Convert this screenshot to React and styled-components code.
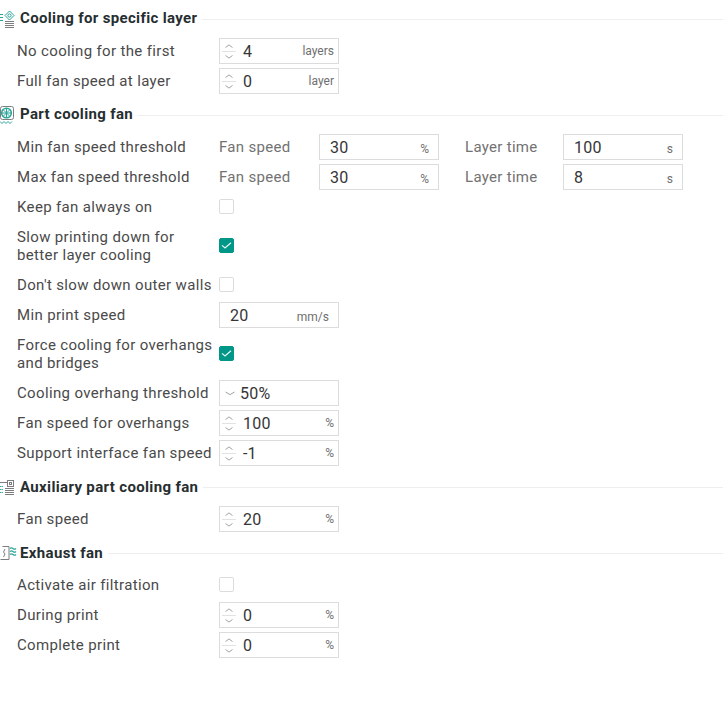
import React from "react";
import styled, { createGlobalStyle } from "styled-components";

const GlobalStyle = createGlobalStyle`
  html, body {
    margin: 0;
    padding: 0;
    background: #fff;
  }
  body {
    font-family: Roboto, "Noto Sans", sans-serif;
  }
`;

const Page = styled.div`
  width: 723px;
  height: 718px;
  overflow: hidden;
  padding-top: 8px;
  box-sizing: border-box;
`;

const Section = styled.section`
  margin-top: ${(p) => p.$top || 0}px;
`;

const Header = styled.div`
  display: flex;
  align-items: center;
  height: 20px;
  margin-bottom: ${(p) => p.$bottom}px;
`;

const IconSlot = styled.span`
  width: 20px;
  height: 20px;
  flex: none;
  display: block;
  svg {
    display: block;
  }
`;

const Title = styled.h3`
  margin: 0 5px 0 0;
  font-size: 15px;
  line-height: 20px;
  font-weight: 700;
  letter-spacing: 0.35px;
  color: #262e30;
  white-space: nowrap;
`;

const Rule = styled.span`
  flex: 1;
  height: 1px;
  margin-top: ${(p) => p.$top ?? 2}px;
  background: #eeeeee;
`;

const Rows = styled.div`
  display: flex;
  flex-direction: column;
  gap: 4px;
  padding-left: 17px;
`;

const Row = styled.div`
  display: flex;
  align-items: center;
  min-height: ${(p) => (p.$tall ? 44 : 26)}px;
`;

const Label = styled.label`
  width: 202px;
  flex: none;
  font-size: 15px;
  line-height: 18px;
  letter-spacing: 0.35px;
  color: #4a4a4a;
  white-space: pre-line;
`;

const SideLabel = styled.span`
  width: ${(p) => p.$w}px;
  flex: none;
  font-size: 15px;
  letter-spacing: 0.3px;
  color: #727272;
  white-space: nowrap;
`;

const Field = styled.div`
  width: 120px;
  height: 26px;
  box-sizing: border-box;
  flex: none;
  display: flex;
  align-items: center;
  border: 1px solid #dcdcdc;
  margin-right: ${(p) => p.$after || 0}px;
  background: #fff;
`;

const Spinner = styled.span`
  width: 23px;
  height: 24px;
  flex: none;
  display: block;
  svg {
    display: block;
  }
`;

const Value = styled.span`
  font-size: 16px;
  letter-spacing: 0.2px;
  color: #363636;
  padding-left: ${(p) => p.$pad ?? 0}px;
  flex: 1;
`;

const Unit = styled.span`
  font-size: 12px;
  color: #6f6f6f;
  padding-right: ${(p) => p.$right}px;
  padding-top: ${(p) => (p.$low ? 4 : 0)}px;
`;

const Box = styled.span`
  width: 15px;
  height: 15px;
  box-sizing: border-box;
  flex: none;
  margin-bottom: 2px;
  border-radius: 2px;
  border: 1px solid ${(p) => (p.$on ? "#009688" : "#dcdcdc")};
  background: ${(p) => (p.$on ? "#009688" : "#fff")};
  display: flex;
  align-items: center;
  justify-content: center;
`;

const teal = "#2aa59a";
const ink = "#7d7d7d";

const SpecificIcon = () => (
  <svg width="18" height="20" viewBox="0 0 18 20" fill="none">
    <g stroke={teal} strokeWidth="1">
      <path d="M0 6.5h3M0 9.5h3M0 12.5h3" />
      <path d="M9.5 3l4.5 4.5-4.5 4.5L5 7.5z" />
      <circle cx="9.5" cy="7.5" r="1.6" />
    </g>
    <path d="M5 13.5h9M5 15.5h9M5 17.5h9M5 19.5h9" stroke={ink} strokeWidth="1" />
  </svg>
);

const PartFanIcon = () => (
  <svg width="18" height="20" viewBox="0 0 18 20" fill="none">
    <rect x="0.5" y="2.5" width="13" height="13" rx="2" stroke={ink} />
    <circle cx="6.5" cy="9" r="4.8" stroke={teal} strokeWidth="1.6" />
    <path d="M6.5 4.5v9M2 9h9M3.4 5.9l6.2 6.2M9.6 5.9l-6.2 6.2" stroke={teal} />
    <path d="M0 17.5l2 2 2-2 2 2 2-2 2 2 2-2" stroke={teal} />
  </svg>
);

const AuxIcon = () => (
  <svg width="18" height="20" viewBox="0 0 18 20" fill="none">
    <rect x="7.5" y="3.5" width="6" height="6" stroke={ink} />
    <rect x="9.5" y="5.5" width="2" height="2" stroke={ink} />
    <path d="M0 5.5h7" stroke={ink} />
    <path d="M0 9.5h3M0 12.5h3M0 15.5h3" stroke={teal} strokeDasharray="1.5 0.6" />
    <path d="M5 11.5h9M5 13.5h9M5 15.5h9M5 17.5h9" stroke={ink} />
  </svg>
);

const ExhaustIcon = () => (
  <svg width="18" height="20" viewBox="0 0 18 20" fill="none">
    <path d="M2.5 3.5h6.5v13H0.5" stroke={ink} />
    <path d="M5 6l-1.5 3 1.5 2-1.5 3" stroke={ink} />
    <path d="M10 5.5q1.5-1.4 3 0t3 0M10 8.5q1.5-1.4 3 0t3 0M10 11.5q1.5-1.4 3 0t3 0" stroke={teal} strokeWidth="1.2" />
  </svg>
);

const SpinIcon = () => (
  <svg width="23" height="24" viewBox="0 0 23 24" fill="none">
    <path d="M5.5 8.5l3.5-2.6 3.5 2.6" stroke="#a3a3a3" strokeWidth="1" />
    <path d="M2 12.5h14" stroke="#e2e2e2" />
    <path d="M5.5 16.5l3.5 2.6 3.5-2.6" stroke="#a3a3a3" strokeWidth="1" />
  </svg>
);

const ChevronIcon = () => (
  <svg width="20" height="24" viewBox="0 0 20 24" fill="none">
    <path d="M5.5 11l4.5 2.6 4.5-2.6" stroke="#a3a3a3" />
  </svg>
);

const Tick = () => (
  <svg width="11" height="9" viewBox="0 0 11 9" fill="none">
    <path d="M1 4.4l3 2.6 6-5.2" stroke="#e8f6f4" strokeWidth="1.2" />
  </svg>
);

// spinner field: stepper on the left, value, unit on the right
const Spin = ({ value, unit }) => (
  <Field>
    <Spinner>
      <SpinIcon />
    </Spinner>
    <Value>{value}</Value>
    <Unit $right={4}>{unit}</Unit>
  </Field>
);

const Plain = ({ value, unit, after }) => (
  <Field $after={after}>
    <Value $pad={10}>{value}</Value>
    <Unit $low $right={9}>{unit}</Unit>
  </Field>
);

const Threshold = ({ label }) => (
  <Row>
    <Label>{label}</Label>
    <SideLabel $w={100}>Fan speed</SideLabel>
    <Plain value="30" unit="%" after={26} />
    <SideLabel $w={98}>Layer time</SideLabel>
    <Plain value={label.startsWith("Min") ? "100" : "8"} unit="s" />
  </Row>
);

const CheckRow = ({ label, on, tall }) => (
  <Row $tall={tall}>
    <Label>{label}</Label>
    <Box $on={on}>{on && <Tick />}</Box>
  </Row>
);

const SpinRow = ({ label, value, unit }) => (
  <Row>
    <Label>{label}</Label>
    <Spin value={value} unit={unit} />
  </Row>
);

export default function App() {
  return (
    <Page>
      <GlobalStyle />
      <Section>
        <Header $bottom={10}>
          <IconSlot><SpecificIcon /></IconSlot>
          <Title>Cooling for specific layer</Title>
          <Rule />
        </Header>
        <Rows>
          <SpinRow label="No cooling for the first" value="4" unit="layers" />
          <SpinRow label="Full fan speed at layer" value="0" unit="layer" />
        </Rows>
      </Section>

      <Section $top={10}>
        <Header $bottom={10}>
          <IconSlot><PartFanIcon /></IconSlot>
          <Title>Part cooling fan</Title>
          <Rule />
        </Header>
        <Rows>
          <Threshold label="Min fan speed threshold" />
          <Threshold label="Max fan speed threshold" />
          <CheckRow label="Keep fan always on" />
          <CheckRow label={"Slow printing down for\nbetter layer cooling"} on tall />
          <CheckRow label="Don't slow down outer walls" />
          <Row>
            <Label>Min print speed</Label>
            <Plain value="20" unit="mm/s" />
          </Row>
          <CheckRow label={"Force cooling for overhangs\nand bridges"} on tall />
          <Row>
            <Label>Cooling overhang threshold</Label>
            <Field>
              <ChevronIcon />
              <Value>50%</Value>
            </Field>
          </Row>
          <SpinRow label="Fan speed for overhangs" value="100" unit="%" />
          <SpinRow label="Support interface fan speed" value="-1" unit="%" />
        </Rows>
      </Section>

      <Section $top={11}>
        <Header $bottom={9}>
          <IconSlot><AuxIcon /></IconSlot>
          <Title>Auxiliary part cooling fan</Title>
          <Rule $top={0} />
        </Header>
        <Rows>
          <SpinRow label="Fan speed" value="20" unit="%" />
        </Rows>
      </Section>

      <Section $top={11}>
        <Header $bottom={9}>
          <IconSlot><ExhaustIcon /></IconSlot>
          <Title>Exhaust fan</Title>
          <Rule $top={0} />
        </Header>
        <Rows>
          <CheckRow label="Activate air filtration" />
          <SpinRow label="During print" value="0" unit="%" />
          <SpinRow label="Complete print" value="0" unit="%" />
        </Rows>
      </Section>
    </Page>
  );
}
